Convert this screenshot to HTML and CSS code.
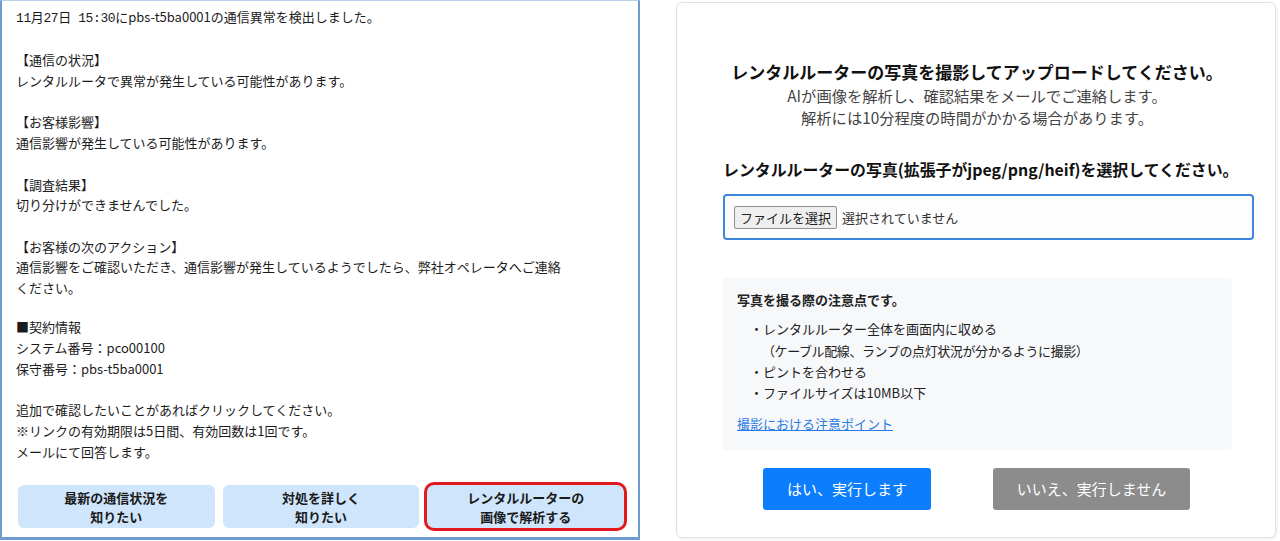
FILE: index.html
```html
<!DOCTYPE html>
<html lang="ja">
<head>
    <meta charset="UTF-8">
    <meta name="viewport" content="width=device-width, initial-scale=1.0">
    <title>通信異常のお知らせ</title>
    <link rel="stylesheet" href="styles.css">
</head>
<body>

    <div class="page">

        <!-- メール本文 -->
        <div class="mail">
            <div class="mail-body">
                <p><span class="mono">11月27日 15:30</span>にpbs-t5ba0001の通信異常を検出しました。</p>
                <p class="blank"></p>
                <p>【通信の状況】</p>
                <p>レンタルルータで異常が発生している可能性があります。</p>
                <p class="blank"></p>
                <p>【お客様影響】</p>
                <p>通信影響が発生している可能性があります。</p>
                <p class="blank"></p>
                <p>【調査結果】</p>
                <p>切り分けができませんでした。</p>
                <p class="blank"></p>
                <p>【お客様の次のアクション】</p>
                <p>通信影響をご確認いただき、通信影響が発生しているようでしたら、弊社オペレータへご連絡</p>
                <p>ください。</p>
                <p class="blank"></p>
                <p class="gap">■契約情報</p>
                <p>システム番号：pco00100</p>
                <p>保守番号：pbs-t5ba0001</p>
                <p class="blank"></p>
                <p>追加で確認したいことがあればクリックしてください。</p>
                <p>※リンクの有効期限は5日間、有効回数は1回です。</p>
                <p>メールにて回答します。</p>
            </div>

            <div class="mail-actions">
                <a href="#" class="mail-btn">最新の通信状況を<br>知りたい</a>
                <a href="#" class="mail-btn">対処を詳しく<br>知りたい</a>
                <a href="#" class="mail-btn selected">レンタルルーターの<br>画像で解析する</a>
            </div>
        </div>

        <!-- アップロード画面 -->
        <div class="card">
            <h2>レンタルルーターの写真を撮影してアップロードしてください。</h2>
            <p class="lead">AIが画像を解析し、確認結果をメールでご連絡します。<br>解析には10分程度の時間がかかる場合があります。</p>

            <h3>レンタルルーターの写真(拡張子がjpeg/png/heif)を選択してください。</h3>

            <label class="file-box" for="fileInput">
                <input type="file" id="fileInput" accept="image/jpeg,image/png,image/heif">
                <span class="file-btn">ファイルを選択</span>
                <span class="file-name" id="fileName">選択されていません</span>
            </label>

            <div class="notes">
                <p class="notes-title">写真を撮る際の注意点です。</p>
                <ul>
                    <li>・レンタルルーター全体を画面内に収める<br><span class="sub">（ケーブル配線、ランプの点灯状況が分かるように撮影）</span></li>
                    <li>・ピントを合わせる</li>
                    <li>・ファイルサイズは10MB以下</li>
                </ul>
                <a href="#" class="notes-link">撮影における注意ポイント</a>
            </div>

            <div class="card-actions">
                <button class="btn-yes">はい、実行します</button>
                <button class="btn-no">いいえ、実行しません</button>
            </div>
        </div>

    </div>

    <script>
        const fileInput = document.getElementById("fileInput");
        const fileName = document.getElementById("fileName");

        fileInput.addEventListener("change", () => {
            const file = fileInput.files[0];
            fileName.textContent = file ? file.name : "選択されていません";
        });
    </script>

</body>
</html>
```

FILE: styles.css
```css
* {
    margin: 0;
    padding: 0;
    box-sizing: border-box;
}

body {
    background: #fff;
    font-family: "Noto Sans CJK JP", "Noto Sans", sans-serif;
    color: #222;
}

.page {
    display: flex;
    align-items: flex-start;
    height: 541px;
}

/* Left: mail window */
.mail {
    width: 640px;
    height: 540px;
    border: 2px solid #6f9bd3;
    border-top: 1px solid #b6d0ee;
    border-bottom-width: 3px;
    display: flex;
    flex-direction: column;
}

.mail-body {
    padding: 6px 14px 0 14px;
    font-size: 13px;
    line-height: 20.7px;
    color: #1c1c1c;
}

.mail-body p {
    white-space: nowrap;
}

.mail-body .blank {
    height: 20.7px;
}

.mail-body .gap {
    margin-top: -2px;
}

.mono {
    font-family: "Liberation Mono", "Noto Sans CJK JP", monospace;
    letter-spacing: -0.4px;
}

.mail-actions {
    display: flex;
    gap: 8px;
    padding: 0 14px 0 16px;
    margin-top: auto;
    margin-bottom: 9px;
}

.mail-btn {
    flex: 1;
    height: 43px;
    display: flex;
    align-items: center;
    justify-content: center;
    text-align: center;
    background: #cfe5fb;
    border-radius: 6px;
    color: #1a1a1a;
    font-size: 13px;
    font-weight: bold;
    line-height: 19px;
    text-decoration: none;
}

.mail-btn.selected {
    box-shadow: 0 0 0 3px #e01a1f;
    border-radius: 7px;
}

/* Right: upload card */
.card {
    width: 600px;
    height: 536px;
    margin-left: 36px;
    margin-top: 2px;
    border: 1px solid #e2e2e2;
    border-radius: 6px;
    box-shadow: 1px 1px 3px rgba(0, 0, 0, 0.08);
    padding: 57px 0 0 46px;
    display: flex;
    flex-direction: column;
}

.card h2 {
    width: 508px;
    text-align: center;
    font-size: 17px;
    line-height: 24px;
    color: #111;
    white-space: nowrap;
}

.lead {
    width: 508px;
    text-align: center;
    font-size: 15.3px;
    line-height: 22px;
    color: #444;
}

.card h3 {
    width: 508px;
    margin-top: 30px;
    text-align: center;
    font-size: 15.9px;
    line-height: 24px;
    color: #111;
    white-space: nowrap;
}

.file-box {
    width: 531px;
    height: 46px;
    margin-top: 12px;
    border: 2px solid #3d86dc;
    border-radius: 4px;
    background: #fdfdfd;
    display: flex;
    align-items: center;
    padding-left: 9px;
    font-size: 13px;
    cursor: pointer;
}

.file-box input[type="file"] {
    display: none;
}

.file-btn {
    padding: 1px 5px;
    background: #efefef;
    border: 1px solid #8f8f8f;
    border-radius: 2px;
    color: #222;
    line-height: 19px;
}

.file-name {
    margin-left: 5px;
    color: #333;
}

.notes {
    width: 509px;
    margin-top: 38px;
    background: #f7f8fa;
    border-radius: 3px;
    padding: 11px 14px 15px;
    font-size: 13px;
    line-height: 21.3px;
    color: #222;
}

.notes-title {
    font-weight: bold;
    margin-bottom: 8px;
}

.notes ul {
    list-style: none;
    padding-left: 13px;
}

.notes .sub {
    display: inline-block;
    padding-left: 12px;
    letter-spacing: -0.4px;
}

.notes-link {
    display: inline-block;
    margin-top: 10px;
    color: #2a7be4;
    text-decoration: underline;
}

.card-actions {
    display: flex;
    gap: 62px;
    margin-top: 18px;
    padding-left: 40px;
}

.card-actions button {
    height: 42px;
    border: none;
    border-radius: 3px;
    color: #fff;
    font-family: inherit;
    font-size: 15px;
    cursor: pointer;
}

.btn-yes {
    width: 168px;
    background: #0b7dfd;
}

.btn-no {
    width: 197px;
    background: #8c8c8c;
}
```
